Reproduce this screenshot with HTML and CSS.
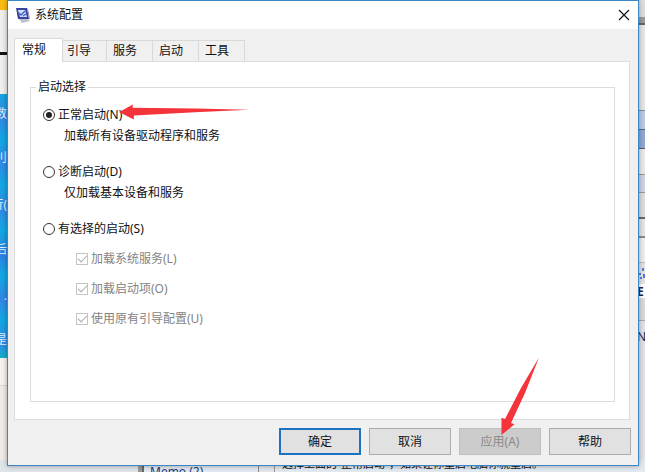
FILE: index.html
```
<!DOCTYPE html>
<html lang="zh-CN">
<head>
  <meta charset="UTF-8">
  <meta name="viewport" content="width=device-width, initial-scale=1.0">
  <title>系统配置</title>
  <link rel="stylesheet" href="styles.css">
</head>
<body>
  <!-- Windows behind the dialog -->
  <div class="desktop" aria-hidden="true">
    <div class="strip-left">
      <span class="word word-1">数</span>
      <span class="word word-2">刂</span>
      <span class="word word-3">行(</span>
      <span class="word word-4">后</span>
      <span class="word word-5">.</span>
      <span class="word word-6">是</span>
    </div>
    <div class="strip-right">
      <svg class="mark mark-dots" width="7" height="14" viewBox="0 0 7 14">
        <path d="M1 7 h2 v2 h-2 Z M4 2 h2 v3 h-2 Z M2 11 h2 v2 h-2 Z M5 8 h2 v4 h-2 Z" fill="#5b78e0"/>
      </svg>
      <span class="mark mark-e">E</span>
      <span class="mark mark-n">N</span>
    </div>
    <div class="strip-bottom">
      <span class="note note-link">Memo (2)</span>
      <span class="note note-text">选择上面的“正常启动”，如果让你重启电脑你就重启。</span>
    </div>
  </div>

  <main class="dialog">
    <header class="titlebar">
      <svg class="app-icon" width="15" height="16" viewBox="0 0 15 16">
        <path d="M3 12 L11 11 L14 14 L6 16 Z" fill="#bfc0cf"/>
        <path d="M0 1 L11 1 L13 12 L2 12 Z" fill="#3a449c"/>
        <path d="M2 3 L9 3 L11 10 L4 10 Z" fill="#d3e2fb"/>
        <path d="M3 6 L5 8 L9 4 M7 9 L10 7" fill="none" stroke="#4860cc" stroke-width="1.5"/>
        <path d="M11 1 L12 2 L14 12 L13 12 Z" fill="#8d90b8"/>
      </svg>
      <h1>系统配置</h1>
      <button class="close-btn" type="button" aria-label="关闭">
        <svg width="12" height="12" viewBox="0 0 12 12">
          <path d="M1 1 L11 11 M11 1 L1 11" fill="none" stroke="#111" stroke-width="1.2"/>
        </svg>
      </button>
    </header>

    <nav class="tabs" role="tablist">
      <button class="tab active" type="button" role="tab" aria-selected="true">常规</button>
      <button class="tab" type="button" role="tab">引导</button>
      <button class="tab" type="button" role="tab">服务</button>
      <button class="tab" type="button" role="tab">启动</button>
      <button class="tab" type="button" role="tab">工具</button>
    </nav>

    <section class="panel" role="tabpanel">
      <fieldset class="group">
        <legend>启动选择</legend>
        <div class="option">
          <input type="radio" id="normal" name="startup" checked>
          <label for="normal">正常启动(N)</label>
        </div>
        <p class="hint">加载所有设备驱动程序和服务</p>

        <div class="option">
          <input type="radio" id="diagnostic" name="startup">
          <label for="diagnostic">诊断启动(D)</label>
        </div>
        <p class="hint">仅加载基本设备和服务</p>

        <div class="option">
          <input type="radio" id="selective" name="startup">
          <label for="selective">有选择的启动(S)</label>
        </div>
        <div class="option sub">
          <input type="checkbox" id="services" checked disabled>
          <label for="services">加载系统服务(L)</label>
        </div>
        <div class="option sub">
          <input type="checkbox" id="items" checked disabled>
          <label for="items">加载启动项(O)</label>
        </div>
        <div class="option sub">
          <input type="checkbox" id="bootconfig" checked disabled>
          <label for="bootconfig">使用原有引导配置(U)</label>
        </div>
      </fieldset>
    </section>

    <footer class="actions">
      <button class="btn btn-default" type="button">确定</button>
      <button class="btn" type="button">取消</button>
      <button class="btn" type="button" disabled>应用(A)</button>
      <button class="btn" type="button">帮助</button>
    </footer>
  </main>

  <!-- Red arrows drawn over the dialog -->
  <svg class="arrows" width="645" height="472" viewBox="0 0 645 472" aria-hidden="true">
    <path d="M119 112 L133 104.5 L132.5 107.7 L195 108.6 L249 109.7 L195 112.3 L134 115.6 L133.7 119.6 Z" fill="#f5333a"/>
    <path d="M501.5 435 L501.5 417.7 L505 419 L521 388 L539 357.5 L525 393 L511 423 L514.5 424.3 Z" fill="#f5333a"/>
  </svg>
</body>
</html>
```
FILE: styles.css
```
* {
  box-sizing: border-box;
}

body {
  margin: 0;
  padding: 0 6px 6px 7px;
  min-height: 100vh;
  display: flex;
  position: relative;
  overflow: hidden;
  background-color: #eeeeee;
  color: #111111;
  font-family: "Noto Sans", "Noto Sans CJK SC", sans-serif;
  font-size: 12px;
  line-height: 16px;
}

button {
  font: inherit;
  color: inherit;
}

/* Desktop behind the dialog */
.desktop {
  position: absolute;
  inset: 0;
  overflow: hidden;
}

.strip-left {
  position: absolute;
  left: 0;
  top: 0;
  bottom: 0;
  width: 8px;
  overflow: hidden;
  background: linear-gradient(
    #fbbc12 0 10px, #f0efed 10px 52px, #111111 52px 55px, #f0efed 55px 94px,
    #14a5dc 94px, #3386e6 116px, #12a8e2 140px, #3386e6 160px,
    #12a8e2 185px, #3386e6 208px, #12a8e2 230px, #2c80e4 255px,
    #12a8e2 275px, #3386e6 300px, #12a8e2 320px, #3386e6 342px, #12b0cc 358px,
    #f6f2ee 358px 385px, #d8d8d8 385px 386px, #eeebe8 386px);
}

.word {
  position: absolute;
  right: 1px;
  color: #e2f2ff;
  white-space: nowrap;
}

.word-1 { top: 106px; }
.word-2 { top: 150px; }
.word-3 { top: 197px; }
.word-4 { top: 242px; }
.word-5 { top: 288px; }
.word-6 { top: 332px; }

.strip-right {
  position: absolute;
  right: 0;
  top: 0;
  bottom: 0;
  width: 8px;
  overflow: hidden;
  background: linear-gradient(
    #dedede 0 17px, #9a9a9a 17px 23px, #666666 23px 25px, #e6e6e9 25px 110px,
    #7f8ba3 110px 111px, #b9c9e6 111px 129px, #59677f 129px 130px,
    #8fa8d3 130px 148px, #555f70 148px 149px, #e9e9ea 149px 174px,
    #999999 174px 175px, #cdd3e2 175px 192px, #999999 192px 193px,
    #dcdcdc 193px 217px, #666666 217px 219px, #e4e4e4 219px 236px,
    #8a8a8a 236px 238px, #ededed 238px 262px, #bbbbbb 262px 263px,
    #e3e3e3 263px 284px, #ffffff 284px 298px,
    #d9d9d9 298px 320px, #aaaaaa 320px 321px, #dfe2e8 321px);
}

.mark {
  position: absolute;
  left: 0;
  color: #222244;
}

.mark-dots { top: 266px; left: 1px; }
.mark-e { top: 284px; font-weight: bold; }
.mark-n { top: 329px; }

.strip-bottom {
  position: absolute;
  left: 0;
  right: 0;
  bottom: 0;
  height: 12px;
  overflow: hidden;
  background: linear-gradient(90deg,
    #dfe4e9 0 138px, #999999 138px 142px, #666666 142px 144px,
    #e2e9f2 144px 258px, #888888 258px 259px, #e2e6ec 259px 274px,
    #999999 274px 275px, #e2e9ef 275px);
}

.note {
  position: absolute;
  white-space: nowrap;
}

.note-link { left: 150px; top: 4px; color: #1d3a78; }
.note-text { left: 282px; bottom: 0; font-size: 11px; }

/* Dialog window */
.dialog {
  position: relative;
  flex: 1;
  display: flex;
  flex-direction: column;
  background-color: #f0f0f0;
  border: 1px solid #3c86c4;
  box-shadow: 0 0 5px rgba(0, 0, 0, 0.35);
}

.titlebar {
  display: flex;
  align-items: center;
  height: 28px;
  padding: 0 8px;
  background-color: #ffffff;
}

.titlebar h1 {
  flex: 1;
  margin: 0 0 0 4px;
  font-size: 12px;
  font-weight: normal;
}

.close-btn {
  display: flex;
  padding: 0;
  border: none;
  background: none;
}

/* Tabs */
.tabs {
  display: flex;
  align-items: flex-end;
  height: 32px;
  padding-left: 6px;
}

.tab {
  height: 21px;
  margin-right: -1px;
  padding: 0 15px 0 6px;
  border: 1px solid #d9d9d9;
  border-bottom: none;
  background-color: #f0f0f0;
}

.tab.active {
  position: relative;
  z-index: 1;
  height: 24px;
  margin: 0 -3px -1px 0;
  padding: 0 16px 2px 7px;
  background-color: #ffffff;
}

.panel {
  flex: 1;
  display: flex;
  margin: 0 8px 0 6px;
  padding: 17px 14px 17px 15px;
  border: 1px solid #dcdcdc;
  background-color: #ffffff;
}

/* Startup options */
.group {
  flex: 1;
  margin: 0;
  padding: 12px;
  border: 1px solid #dcdcdc;
}

.group legend {
  margin-left: -7px;
  padding: 0 2px;
}

.option {
  display: flex;
  align-items: center;
  gap: 3px;
}

.hint {
  margin: 5px 0 20px 21px;
}

.option.sub {
  margin: 14px 0 0 33px;
  color: #838383;
}

.option input {
  appearance: none;
  display: grid;
  place-items: center;
  width: 12px;
  height: 12px;
  margin: 0;
  background-color: #ffffff;
}

.option input[type="radio"] {
  border: 1px solid #333333;
  border-radius: 50%;
}

.option input[type="radio"]:checked::before {
  content: "";
  width: 6px;
  height: 6px;
  border-radius: 50%;
  background-color: #222222;
}

.option input[type="checkbox"] {
  border: 1px solid #c4c4c4;
}

.option input[type="checkbox"]:checked::before {
  content: "";
  width: 8px;
  height: 4px;
  margin-bottom: 3px;
  border-left: 1px solid #aaaaaa;
  border-bottom: 1px solid #aaaaaa;
  transform: rotate(-45deg);
}

/* Bottom buttons */
.actions {
  display: flex;
  justify-content: flex-end;
  gap: 8px;
  padding: 8px 7px 10px;
}

.btn {
  width: 82px;
  height: 27px;
  padding: 0;
  border: 1px solid #adadad;
  background-color: #e1e1e1;
}

.btn-default {
  border: 2px solid #1c72c0;
}

.btn:disabled {
  border-color: #bfbfbf;
  background-color: #cccccc;
  color: #8a8a8a;
}

/* Arrows */
.arrows {
  position: absolute;
  left: 0;
  top: 0;
  pointer-events: none;
}
```
